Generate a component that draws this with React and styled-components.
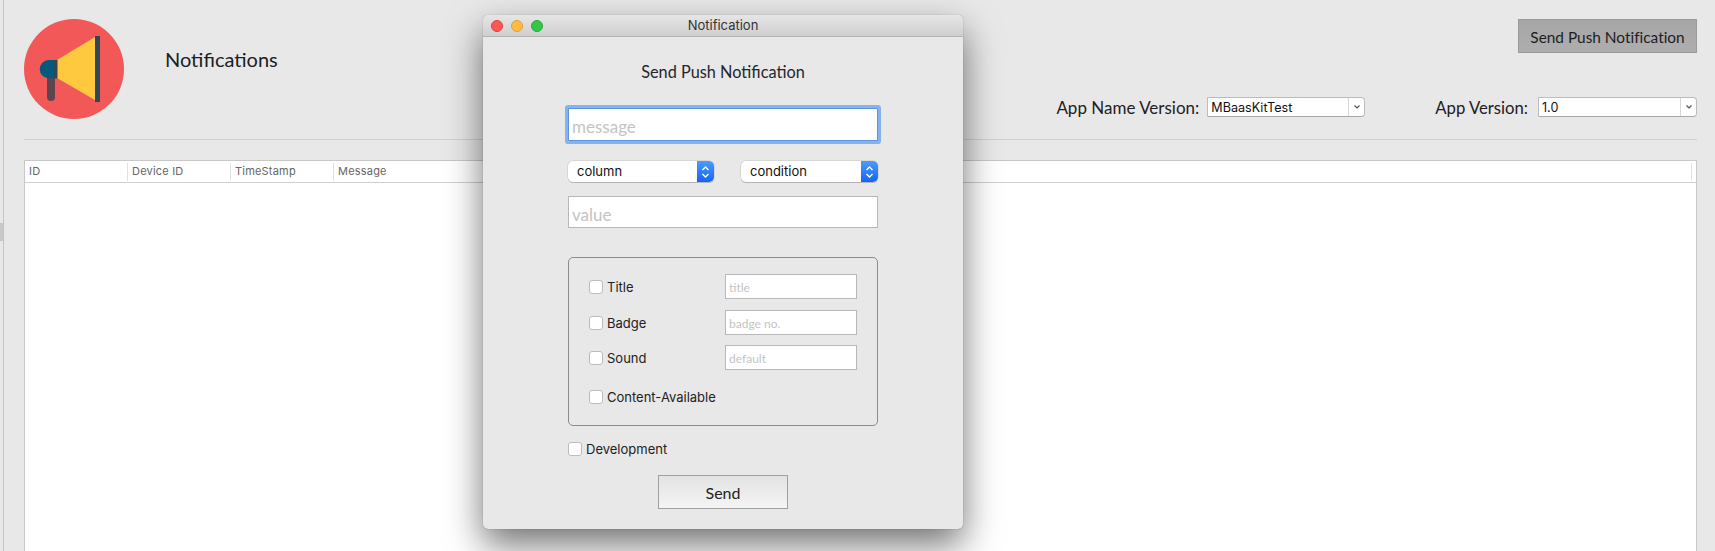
import React from "react";
import styled, { createGlobalStyle, css } from "styled-components";

const GlobalStyle = createGlobalStyle`
    html, body {
        margin: 0;
        padding: 0;
        background: #e8e8e8;
        overflow: hidden;
        font-variant-ligatures: none;
    }
    * {
        box-sizing: border-box;
    }
`

const avenir = `"Lato", "Open Sans", sans-serif`;
const system = `"Inter", "Liberation Sans", sans-serif`;

const Page = styled.div`
    position: relative;
    display: flex;
    width: 1715px;
    height: 551px;
    overflow: hidden;
    background: #e8e8e8;
`
const Strip = styled.div`
    width: 4px;
    flex-shrink: 0;
    border-right: 1px solid #c4c4c4;
    padding-top: 223px;
    &::before {
        content: "";
        display: block;
        width: 3px;
        height: 18px;
        background: #c8c8c8;
    }
`
const Main = styled.div`
    flex: 1;
    display: flex;
    flex-direction: column;
    padding: 0 18px 0 20px;
    min-width: 0;
`
const Header = styled.header`
    display: flex;
    height: 140px;
    flex-shrink: 0;
    padding-top: 19px;
    border-bottom: 1px solid #d0d0d0;
`
const Title = styled.h1`
    margin: 28px 0 0 41px;
    font: 400 20px/24px ${avenir};
    color: #1c2026;
`
const HeaderRight = styled.div`
    margin-left: auto;
    display: flex;
    flex-direction: column;
    align-items: flex-end;
`
const PushButton = styled.button`
    width: 179px;
    height: 34px;
    padding: 3px 0 0;
    border: 1px solid #9a9a9a;
    background: linear-gradient(#a6a6a6, #aeaeae);
    font: 400 15.4px/1 ${avenir};
    font-variant-ligatures: none;
    color: #1e1e1e;
`
const Filters = styled.div`
    display: flex;
    align-items: center;
    margin-top: 43px;
`
const FilterLabel = styled.label`
    margin-left: ${p => p.$gap}px;
    margin-right: ${p => p.$after}px;
    padding-top: 2px;
    font: 400 ${p => p.$size}px/20px ${avenir};
    color: #1e2024;
`
const ComboBox = styled.div`
    display: flex;
    align-items: center;
    width: ${p => p.$width}px;
    height: 20px;
    background: #fff;
    border: 1px solid #bcbcbc;
    border-bottom-color: #a8a8a8;
    border-radius: 1px 4px 4px 1px;
    font: 400 12.6px/18px ${system};
    color: #111;
`
const ComboText = styled.span`
    flex: 1;
    padding: 1px 0 0 3px;
`
const ComboArrow = styled.span`
    display: flex;
    align-items: center;
    justify-content: center;
    width: 16px;
    height: 100%;
    border-left: 1px solid #d8d8d8;
`
const Table = styled.div`
    flex: 1;
    margin-top: 20px;
    background: #fff;
    border: 1px solid #c8c8c8;
    border-bottom: 0;
`
const TableHead = styled.div`
    display: flex;
    height: 22px;
    padding-top: 2px;
    padding-right: 4px;
    border-bottom: 1px solid #cfcfcf;
`
const HeadCell = styled.div`
    width: ${p => (p.$grow ? "auto" : "103px")};
    flex: ${p => (p.$grow ? 1 : "none")};
    height: 18px;
    padding-left: 4px;
    border-right: 1px solid #e2e2e2;
    font: 400 11px/17px ${system};
    color: #666;
    letter-spacing: 0.2px;
`

const Window = styled.section`
    position: absolute;
    left: 483px;
    top: 15px;
    width: 480px;
    height: 514px;
    display: flex;
    flex-direction: column;
    background: #e8e8e8;
    border-radius: 5px;
    box-shadow: 0 0 1px rgba(0, 0, 0, 0.45), 0 16px 36px rgba(0, 0, 0, 0.55);
`
const TitleBar = styled.div`
    position: relative;
    display: flex;
    align-items: center;
    justify-content: center;
    height: 22px;
    flex-shrink: 0;
    background: linear-gradient(#e6e6e6, #cfcfcf);
    border-bottom: 1px solid #b4b4b4;
    border-radius: 5px 5px 0 0;
    font: 400 13px/1 ${system};
    color: #333;
`
const Lights = styled.div`
    position: absolute;
    left: 8px;
    top: 5px;
    display: flex;
    gap: 8px;
`
const Light = styled.span`
    width: 12px;
    height: 12px;
    border-radius: 50%;
    background: ${p => p.$color};
    border: 1px solid ${p => p.$edge};
`
const Body = styled.div`
    display: flex;
    flex-direction: column;
    padding: 0 85px;
`
const Heading = styled.h2`
    margin: 25px 0 26px;
    text-align: center;
    font: 400 16.3px/20px ${avenir};
    color: #25262a;
`
const fieldBase = css`
    display: block;
    background: #fff;
    border: 1px solid #b8b8b8;
    border-radius: 0;
    outline: none;
    font-family: ${avenir};
    &::placeholder {
        color: #c4c4c4;
        opacity: 1;
    }
`
const BigInput = styled.input`
    ${fieldBase}
    width: 310px;
    height: ${p => (p.$focused ? 33 : 32)}px;
    padding: 4px 3px 0;
    font-size: 17px;
    ${p =>
        p.$focused &&
        css`
            border-color: #5c93e0;
            box-shadow: 0 0 0 3px #85b3ee;
            border-radius: 1px;
        `}
`
const SelectRow = styled.div`
    display: flex;
    justify-content: space-between;
    width: 310px;
    margin: 20px 0 14px;
`
const Select = styled.div`
    display: flex;
    width: ${p => p.$width}px;
    height: 21px;
    background: #fff;
    border-radius: 5px;
    box-shadow: 0 0 0 0.5px #c4c4c4, 0 1px 0 #a8a8a8;
    overflow: hidden;
    font: 400 13px/20px ${system};
    color: #111;
`
const SelectText = styled.span`
    flex: 1;
    padding-left: 9px;
`
const Stepper = styled.span`
    display: flex;
    align-items: center;
    justify-content: center;
    width: 17px;
    background: linear-gradient(#4d9bfb, #1166f5);
`
const Group = styled.fieldset`
    margin: 29px 0 0;
    padding: 16px 20px 0;
    width: 310px;
    height: 169px;
    border: 1px solid #8c8c8c;
    border-radius: 5px;
`
const OptionRow = styled.div`
    display: flex;
    align-items: center;
    justify-content: space-between;
    height: 25px;
    margin-top: ${p => p.$top || 0}px;
`
const Check = styled.label`
    display: flex;
    align-items: center;
    gap: 4px;
    font: 400 13px/16px ${system};
    color: #222;
`
const Box = styled.span`
    width: 14px;
    height: 14px;
    background: #fff;
    border: 1px solid #bcbcbc;
    border-radius: 3px;
`
const SmallInput = styled.input`
    ${fieldBase}
    width: 132px;
    height: 25px;
    padding: 2px 3px 0;
    font-size: 12px;
`
const DevRow = styled.div`
    margin-top: 15px;
`
const Send = styled.button`
    align-self: center;
    width: 130px;
    height: 34px;
    margin-top: 18px;
    padding: 2px 0 0;
    border: 1px solid #a0a0a0;
    background: linear-gradient(#e3e3e3, #f4f4f4);
    font: 400 16px/1 ${avenir};
    color: #222;
`

const Megaphone = () => (
    <svg width="100" height="100" viewBox="0 0 100 100" style={{ flexShrink: 0 }}>
        <circle cx="50" cy="50" r="50" fill="#f25858" />
        <path d="M23 59h8v19a4 4 0 0 1-8 0z" fill="#5b4650" />
        <path d="M33 41H24a9.2 9.2 0 0 0 0 18.300h9z" fill="#05597c" />
        <path d="M33 41 71 18v63L33 59z" fill="#ffc93f" />
        <rect x="30" y="41" width="3.500" height="18.300" fill="#2f4858" />
        <rect x="71" y="17" width="5" height="66" fill="#2f4858" />
    </svg>
);

const Chevron = () => (
    <svg width="8" height="6" viewBox="0 0 8 6">
        <path d="M1.500 1.500 4 4l2.500-2.500" fill="none" stroke="#555" strokeWidth="1.200" />
    </svg>
);

const Updown = () => (
    <svg width="9" height="14" viewBox="0 0 9 14">
        <path d="M1.500 5 4.500 2l3 3M1.500 9l3 3 3-3" fill="none" stroke="#fff" strokeWidth="1.400" />
    </svg>
);

const CheckItem = ({ label }) => (
    <Check>
        <Box />
        {label}
    </Check>
);

const columns = ["ID", "Device ID", "TimeStamp"];

export default function App() {
    return (
        <Page>
            <GlobalStyle />
            <Strip />
            <Main>
                <Header>
                    <Megaphone />
                    <Title>Notifications</Title>
                    <HeaderRight>
                        <PushButton>Send Push Notification</PushButton>
                        <Filters>
                            <FilterLabel $gap={0} $after={8} $size={17}>App Name Version:</FilterLabel>
                            <ComboBox $width={158}>
                                <ComboText>MBaasKitTest</ComboText>
                                <ComboArrow><Chevron /></ComboArrow>
                            </ComboBox>
                            <FilterLabel $gap={70} $after={10} $size={16.7}>App Version:</FilterLabel>
                            <ComboBox $width={159}>
                                <ComboText>1.0</ComboText>
                                <ComboArrow><Chevron /></ComboArrow>
                            </ComboBox>
                        </Filters>
                    </HeaderRight>
                </Header>
                <Table>
                    <TableHead>
                        {columns.map(c => <HeadCell key={c}>{c}</HeadCell>)}
                        <HeadCell $grow>Message</HeadCell>
                    </TableHead>
                </Table>
            </Main>

            <Window>
                <TitleBar>
                    <Lights>
                        <Light $color="#fc5753" $edge="#df3d39" />
                        <Light $color="#fdbc40" $edge="#de9f34" />
                        <Light $color="#33c748" $edge="#27aa35" />
                    </Lights>
                    Notification
                </TitleBar>
                <Body>
                    <Heading>Send Push Notification</Heading>
                    <BigInput $focused placeholder="message" />
                    <SelectRow>
                        <Select $width={146}>
                            <SelectText>column</SelectText>
                            <Stepper><Updown /></Stepper>
                        </Select>
                        <Select $width={137}>
                            <SelectText>condition</SelectText>
                            <Stepper><Updown /></Stepper>
                        </Select>
                    </SelectRow>
                    <BigInput placeholder="value" />
                    <Group>
                        <OptionRow>
                            <CheckItem label="Title" />
                            <SmallInput placeholder="title" />
                        </OptionRow>
                        <OptionRow $top={11}>
                            <CheckItem label="Badge" />
                            <SmallInput placeholder="badge no." />
                        </OptionRow>
                        <OptionRow $top={10}>
                            <CheckItem label="Sound" />
                            <SmallInput placeholder="default" />
                        </OptionRow>
                        <OptionRow $top={14}>
                            <CheckItem label="Content-Available" />
                        </OptionRow>
                    </Group>
                    <DevRow>
                        <CheckItem label="Development" />
                    </DevRow>
                    <Send>Send</Send>
                </Body>
            </Window>
        </Page>
    );
}
